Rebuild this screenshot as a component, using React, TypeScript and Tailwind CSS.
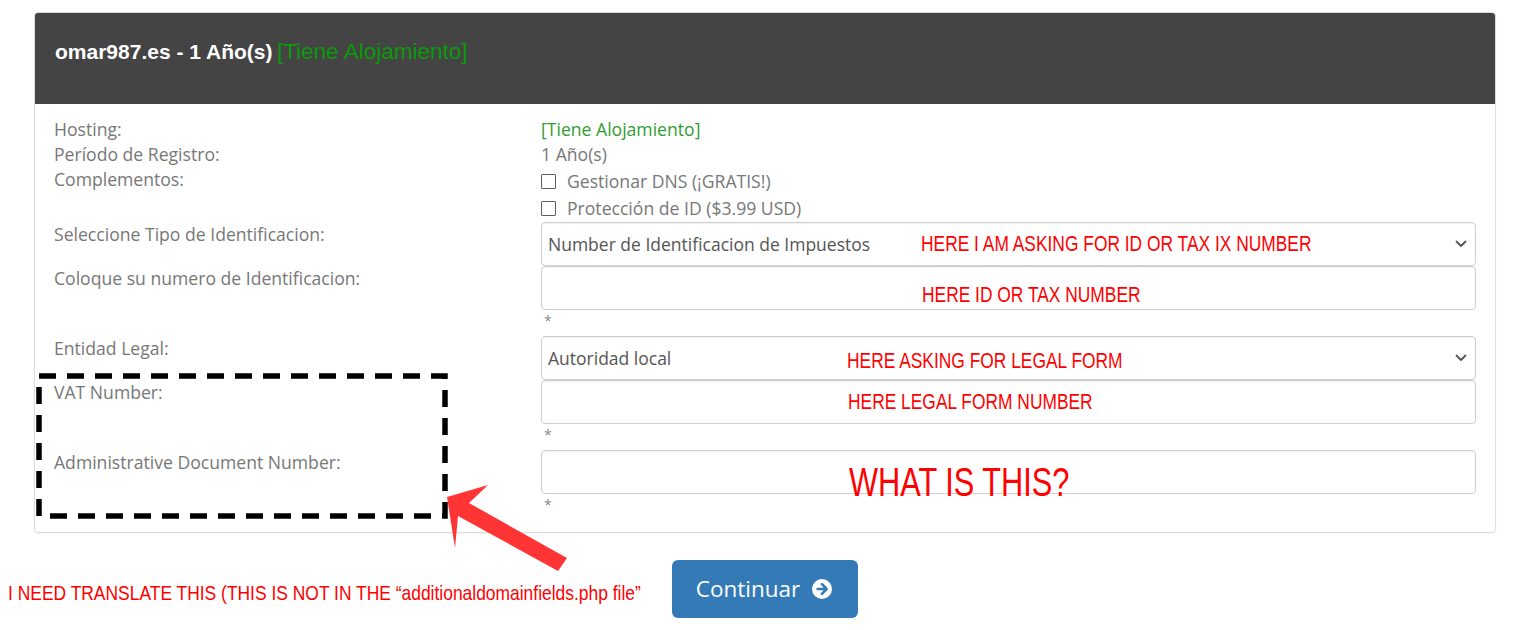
import React from 'react';

const note = "font-['Liberation_Sans',Arial,sans-serif] text-[#ff0000] whitespace-nowrap inline-block origin-left";

function Chevron() {
  return (
    <svg className="absolute right-[8px] top-1/2 -translate-y-1/2" width="12" height="8" viewBox="0 0 12 8" fill="none">
      <path d="M1.5 1.5L6 6l4.5-4.5" stroke="#555" strokeWidth="1.8" strokeLinecap="round" strokeLinejoin="round" />
    </svg>
  );
}

function Field({ select, value, children }: { select?: boolean; value?: string; children?: React.ReactNode }) {
  return (
    <div className="relative h-[44px] rounded-[4px] border border-[#cfcfcf] bg-white shadow-[inset_0_1px_1px_rgba(0,0,0,0.06)] flex items-center pl-[6px]">
      {value && <span className="text-[17.5px] text-[#555]">{value}</span>}
      {select && <Chevron />}
      {children}
    </div>
  );
}

function Star() {
  return <div className="h-[26px] pl-[3px] text-[14px] leading-[22px] text-[#8a8a8a]">*</div>;
}

function Check({ label }: { label: string }) {
  return (
    <div className="h-[27px] flex items-center">
      <span className="w-[15px] h-[15px] border-[1.5px] border-[#5f5f5f] bg-white rounded-[1px]" />
      <span className="ml-[11px]">{label}</span>
    </div>
  );
}

export default function App() {
  return (
    <div className="relative w-[1516px] h-[630px] bg-white font-['Open_Sans',sans-serif] overflow-hidden">
      <div className="pt-[12px] pl-[34px] w-[1496px]">
        {/* Card */}
        <div className="rounded-[4px] border border-[#dcdcdc] overflow-hidden shadow-[0_1px_2px_rgba(0,0,0,0.05)]">
          <div className="h-[91px] bg-[#444444] pl-[20px] pt-[26px] font-['Liberation_Sans',Arial,sans-serif] leading-[26px]">
            <span className="font-bold text-white text-[21px]">omar987.es - 1 Año(s)</span>{' '}
            <span className="text-[#0a9a0a] text-[22.5px]">[Tiene Alojamiento]</span>
          </div>

          <div className="px-[19px] pt-[13px] pb-[12px] text-[17.6px] leading-[25px] text-[#777]">
            <div className="flex">
              <div className="w-[487px]">Hosting:</div>
              <div className="flex-1 text-[#2f9e2f]">[Tiene Alojamiento]</div>
            </div>
            <div className="flex">
              <div className="w-[487px]">Período de Registro:</div>
              <div className="flex-1">1 Año(s)</div>
            </div>
            <div className="flex h-[55px]">
              <div className="w-[487px]">Complementos:</div>
              <div className="flex-1 pt-[1px]">
                <Check label="Gestionar DNS (¡GRATIS!)" />
                <Check label="Protección de ID ($3.99 USD)" />
              </div>
            </div>
            <div className="flex">
              <div className="w-[487px]">Seleccione Tipo de Identificacion:</div>
              <div className="flex-1">
                <Field select value="Number de Identificacion de Impuestos">
                  <span className={`${note} absolute left-[379px] top-[9px] text-[22px] leading-[24px] scale-x-[0.79]`}>
                    HERE I AM ASKING FOR ID OR TAX IX NUMBER
                  </span>
                </Field>
              </div>
            </div>
            <div className="flex">
              <div className="w-[487px]">Coloque su numero de Identificacion:</div>
              <div className="flex-1">
                <Field>
                  <span className={`${note} absolute left-[380px] top-[16px] text-[22px] leading-[24px] scale-x-[0.79]`}>
                    HERE ID OR TAX NUMBER
                  </span>
                </Field>
                <Star />
              </div>
            </div>
            <div className="flex">
              <div className="w-[487px]">Entidad Legal:</div>
              <div className="flex-1">
                <Field select value="Autoridad local">
                  <span className={`${note} absolute left-[305px] top-[12px] text-[22px] leading-[24px] scale-x-[0.79]`}>
                    HERE ASKING FOR LEGAL FORM
                  </span>
                </Field>
              </div>
            </div>
            <div className="flex">
              <div className="w-[487px]">VAT Number:</div>
              <div className="flex-1">
                <Field>
                  <span className={`${note} absolute left-[306px] top-[9px] text-[22px] leading-[24px] scale-x-[0.79]`}>
                    HERE LEGAL FORM NUMBER
                  </span>
                </Field>
                <Star />
              </div>
            </div>
            <div className="flex">
              <div className="w-[487px]">Administrative Document Number:</div>
              <div className="flex-1">
                <Field>
                  <span className={`${note} absolute left-[307px] top-[9px] text-[41px] leading-[44px] scale-x-[0.75]`}>
                    WHAT IS THIS?
                  </span>
                </Field>
                <Star />
              </div>
            </div>
          </div>
        </div>

        {/* Submit */}
        <div className="flex justify-center mt-[27px]">
          <button className="h-[58px] w-[186px] rounded-[6px] bg-[#337ab7] text-white text-[22.5px] flex items-center justify-center gap-[12px] pr-[2px]">
            <span>Continuar</span>
            <svg width="20" height="20" viewBox="0 0 20 20">
              <circle cx="10" cy="10" r="10" fill="#fff" />
              <path d="M10 5.2l4.6 4.8-4.6 4.8M14.2 10H5.6" stroke="#337ab7" strokeWidth="2.6" fill="none" strokeLinecap="round" strokeLinejoin="round" />
            </svg>
          </button>
        </div>
      </div>

      {/* Annotations */}
      <span className={`${note} absolute left-[8px] top-[581px] text-[21px] leading-[24px] scale-x-[0.83]`}>
        I NEED TRANSLATE THIS (THIS IS NOT IN THE “additionaldomainfields.php file”
      </span>
      <svg className="absolute left-0 top-0 pointer-events-none" width="600" height="630">
        <rect x="39" y="376" width="406" height="140" fill="none" stroke="#000" strokeWidth="5.5" strokeDasharray="17 11" />
        <polygon points="447,497 488,485 469,503 567,558 558,571 458,516 455,548" fill="#ff3535" />
      </svg>
    </div>
  );
}
